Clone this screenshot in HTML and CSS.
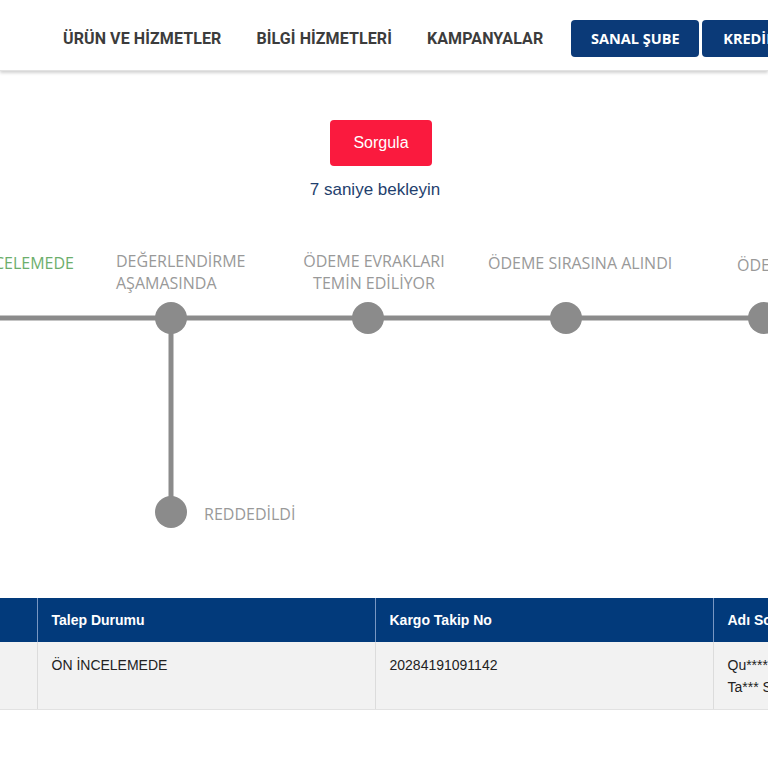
FILE: index.html
```html
<!DOCTYPE html>
<html lang="tr">
<head>
<meta charset="utf-8">
<title>Başvuru Takip</title>
<link rel="stylesheet" href="styles.css">
</head>
<body>
<header class="topbar">
  <nav class="nav">
    <a class="nav-link">ÜRÜN VE HİZMETLER</a>
    <a class="nav-link">BİLGİ HİZMETLERİ</a>
    <a class="nav-link">KAMPANYALAR</a>
    <div class="nav-buttons">
      <a class="nav-btn">SANAL ŞUBE</a>
      <a class="nav-btn">KREDİLER</a>
    </div>
  </nav>
</header>

<section class="query">
  <button class="query-btn">Sorgula</button>
  <p class="query-wait">7 saniye bekleyin</p>
</section>

<section class="timeline">
  <svg class="timeline-svg" width="768" height="300" viewBox="0 0 768 300">
    <line x1="0" y1="78" x2="768" y2="78" class="tl-line"/>
    <line x1="171" y1="78" x2="171" y2="272" class="tl-line"/>
    <circle cx="171" cy="78" r="16" class="tl-dot"/>
    <circle cx="368" cy="78" r="16" class="tl-dot"/>
    <circle cx="566" cy="78" r="16" class="tl-dot"/>
    <circle cx="764" cy="78" r="16" class="tl-dot"/>
    <circle cx="171" cy="272" r="16" class="tl-dot"/>
  </svg>
  <div class="tl-label tl-active tl-right" style="right:694px;top:12px">ÖN İNCELEMEDE</div>
  <div class="tl-label" style="left:116px;top:10px">DEĞERLENDİRME<br>AŞAMASINDA</div>
  <div class="tl-label tl-center" style="left:374px;top:10px">ÖDEME EVRAKLARI<br>TEMİN EDİLİYOR</div>
  <div class="tl-label" style="left:488px;top:12px">ÖDEME SIRASINA ALINDI</div>
  <div class="tl-label" style="left:737px;top:14px">ÖDEME YAPILDI</div>
  <div class="tl-label" style="left:204px;top:263px">REDDEDİLDİ</div>
</section>

<section class="results">
  <table class="result-table">
    <colgroup>
      <col class="c-first"><col class="c-wide"><col class="c-wide"><col class="c-wide">
    </colgroup>
    <thead>
      <tr><th>No</th><th>Talep Durumu</th><th>Kargo Takip No</th><th>Adı Soyadı</th></tr>
    </thead>
    <tbody>
      <tr><td>1</td><td>ÖN İNCELEMEDE</td><td>20284191091142</td><td>Qu**** Ka*****<br>Ta*** S*****</td></tr>
    </tbody>
  </table>
</section>
</body>
</html>
```

FILE: styles.css
```css
* { box-sizing: border-box; }
html, body { margin: 0; padding: 0; }
body {
  width: 768px;
  overflow: hidden;
  background: #fff;
  font-family: "Liberation Sans", Arial, sans-serif;
  color: #333;
}

.topbar {
  height: 71px;
  background: #fff;
  box-shadow: 0 2px 3px rgba(0,0,0,0.18);
  border-bottom: 1px solid #e2e2e2;
  position: relative;
  z-index: 2;
}
.nav {
  display: flex;
  align-items: center;
  height: 70px;
  padding-left: 63px;
  padding-top: 7px;
  white-space: nowrap;
}
.nav-link {
  font-family: "Roboto", sans-serif;
  font-weight: 700;
  font-size: 16px;
  letter-spacing: 0.1px;
  color: #3c3c3c;
  margin-right: 35px;
}
.nav-link:nth-child(3) { margin-right: 28px; }
.nav-buttons { display: flex; gap: 3px; }
.nav-btn {
  display: flex;
  align-items: center;
  justify-content: center;
  height: 37px;
  width: 128px;
  background: #0b3a78;
  color: #fff;
  border-radius: 4px;
  font-family: "Open Sans", sans-serif;
  font-weight: 700;
  font-size: 14.5px;
}
.nav-btn:last-child { justify-content: flex-start; padding-left: 21px; }

.query {
  display: flex;
  flex-direction: column;
  align-items: center;
  padding-top: 49px;
  padding-right: 6px;
}
.query-btn {
  width: 102px;
  height: 46px;
  border: 0;
  border-radius: 4px;
  background: #fa1a3e;
  color: #fff;
  font-family: "Liberation Sans", Arial, sans-serif;
  font-size: 16px;
}
.query-wait {
  margin: 14px 12px 0 0;
  font-family: "Liberation Sans", Arial, sans-serif;
  font-size: 17px;
  line-height: 20px;
  color: #1f3f6e;
}

.timeline {
  position: relative;
  height: 300px;
  margin-top: 40px;
}
.timeline-svg { display: block; }
.tl-line { stroke: #8b8b8b; stroke-width: 5; }
.tl-dot { fill: #8b8b8b; }
.tl-label {
  position: absolute;
  font-family: "Open Sans", sans-serif;
  font-size: 16px;
  line-height: 22px;
  color: #999;
  white-space: nowrap;
}
.tl-center { transform: translateX(-50%); text-align: center; }
.tl-active { color: #6cae6c; }

.results {
  margin-top: 58px;
  overflow: hidden;
}
.result-table {
  table-layout: fixed;
  width: 1051px;
  border-collapse: collapse;
  font-family: "Liberation Sans", Arial, sans-serif;
  font-size: 14px;
}
.c-first { width: 37px; }
.c-wide { width: 338px; }
.result-table th {
  height: 44px;
  background: #023a7b;
  color: #fff;
  text-align: left;
  font-weight: 700;
  padding: 0 14px;
  border-left: 1px solid #7896c2;
  white-space: nowrap;
  overflow: hidden;
}
.result-table th:first-child { border-left: 0; color: #023a7b; }
.result-table td {
  height: 67px;
  background: #f2f2f2;
  vertical-align: top;
  padding: 12px 14px 0;
  line-height: 22px;
  border-left: 1px solid #dcdcdc;
  border-bottom: 1px solid #e2e2e2;
  color: #222;
  white-space: nowrap;
  overflow: hidden;
}
.result-table td:first-child { border-left: 0; color: #f2f2f2; }
```
